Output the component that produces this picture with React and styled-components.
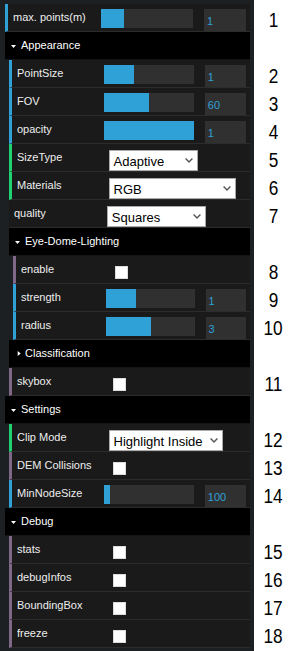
import React from 'react';
import styled, { createGlobalStyle } from 'styled-components';

const GlobalStyle = createGlobalStyle`
  html, body { margin: 0; padding: 0; background: #fff; }
  body { font-family: "Liberation Sans", Arial, sans-serif; }
`;

const Page = styled.div`
  display: flex;
  width: 296px;
  height: 651px;
  overflow: hidden;
  background: #fff;
`;

const Panel = styled.div`
  width: 254px;
  flex: none;
  box-sizing: border-box;
  padding: 4px 4px 0 5px;
  background: #1c2022;
  font: 11px "Liberation Sans", Arial, sans-serif;
  color: #eee;
`;

const Folder = styled.div`
  border-left: 4px solid transparent;
`;

const Title = styled.div`
  margin-left: -4px;
  height: 27px;
  background: #000;
  color: #fff;
  border-bottom: 1px solid #141414;
  display: flex;
  align-items: center;
  padding-left: 6px;
`;

const Arrow = styled.span`
  width: 10px;
  height: 27px;
  flex: none;
  display: flex;
  align-items: center;
`;

const TitleText = styled.span`
  line-height: 27px;
  white-space: nowrap;
`;

const Row = styled.div`
  display: flex;
  height: 27px;
  background: #1a1a1a;
  border-bottom: 1px solid #2c2c2c;
  border-left: ${(p) => (p.$accent ? `3px solid ${p.$accent}` : 'none')};
  padding: 0 4px 0 5px;
`;

const Label = styled.div`
  width: 40%;
  flex: none;
  line-height: 27px;
  white-space: nowrap;
  overflow: hidden;
`;

const Control = styled.div`
  width: 60%;
  flex: none;
  display: flex;
  align-items: flex-start;
`;

const Slider = styled.div`
  width: 66%;
  flex: none;
  margin-left: -5px;
  margin-top: 5px;
  height: 19px;
  background: #303030;
`;

const SliderFill = styled.div`
  height: 100%;
  background: #2fa1d6;
`;

const NumberField = styled.div`
  width: 30%;
  flex: none;
  margin-left: auto;
  margin-top: 5px;
  height: 22px;
  box-sizing: border-box;
  padding: 4px 3px 0;
  line-height: 16px;
  background: #303030;
  color: #2fa1d6;
`;

const SelectBox = styled.div`
  width: ${(p) => p.$w}px;
  flex: none;
  margin-top: 6px;
  height: 21px;
  box-sizing: border-box;
  border: 1px solid #a9a9a9;
  background: #fff;
  color: #000;
  font-size: 13px;
  line-height: 16px;
  display: flex;
  justify-content: space-between;
  align-items: flex-start;
  padding: 3px 4px 0 4px;
  white-space: nowrap;
`;

const Chevron = styled.svg`
  flex: none;
  margin-top: 4px;
`;

const Check = styled.span`
  width: 13px;
  height: 13px;
  flex: none;
  box-sizing: border-box;
  margin: 10px 0 0 4px;
  background: #fff;
  border: 1px solid #dcdcdc;
`;

const Notes = styled.div`
  flex: 1;
  display: flex;
  flex-direction: column;
  padding: 4px 3px 0 0;
`;

const Note = styled.div`
  height: 28px;
  box-sizing: border-box;
  padding-top: 2px;
  line-height: 28px;
  text-align: center;
  font-family: "Liberation Sans", Arial, sans-serif;
  font-size: 20px;
  color: #000;
`;

const NoteText = styled.span`
  display: inline-block;
  transform: scaleX(0.86);
`;

const BLUE = '#2fa1d6';
const PURPLE = '#806787';
const GREEN = '#1ed36f';

const FolderTitle = ({ open, children }) => (
  <Title>
    <Arrow>
      <svg width="6" height="5" viewBox="0 0 6 5">
        {open ? (
          <polygon points="0,2 5,2 2.5,5" fill="#fff" />
        ) : (
          <polygon points="2.7,0 5.7,2.5 2.7,5" fill="#fff" />
        )}
      </svg>
    </Arrow>
    <TitleText>{children}</TitleText>
  </Title>
);

const NumberRow = ({ label, value, pct }) => (
  <Row $accent={BLUE}>
    <Label>{label}</Label>
    <Control>
      <Slider>
        <SliderFill style={{ width: `${pct}%` }} />
      </Slider>
      <NumberField>{value}</NumberField>
    </Control>
  </Row>
);

const SelectRow = ({ label, value, width, accent }) => (
  <Row $accent={accent}>
    <Label>{label}</Label>
    <Control>
      <SelectBox $w={width}>
        <span>{value}</span>
        <Chevron width="8" height="5" viewBox="0 0 8 5">
          <polyline points="0.6,0.6 4,4 7.4,0.6" fill="none" stroke="#555" strokeWidth="1.4" />
        </Chevron>
      </SelectBox>
    </Control>
  </Row>
);

const BoolRow = ({ label }) => (
  <Row $accent={PURPLE}>
    <Label>{label}</Label>
    <Control>
      <Check />
    </Control>
  </Row>
);

const notes = [1, null, 2, 3, 4, 5, 6, 7, null, 8, 9, 10, null, 11, null, 12, 13, 14, null, 15, 16, 17, 18];

export default function App() {
  return (
    <>
      <GlobalStyle />
      <Page>
        <Panel>
          <NumberRow label="max. points(m)" value="1" pct={25} />
          <Folder>
            <FolderTitle open>Appearance</FolderTitle>
            <NumberRow label="PointSize" value="1" pct={34} />
            <NumberRow label="FOV" value="60" pct={50.5} />
            <NumberRow label="opacity" value="1" pct={100} />
            <SelectRow label="SizeType" value="Adaptive" width={89} accent={GREEN} />
            <SelectRow label="Materials" value="RGB" width={127} accent={GREEN} />
            <SelectRow label="quality" value="Squares" width={99} />
            <Folder>
              <FolderTitle open>Eye-Dome-Lighting</FolderTitle>
              <BoolRow label="enable" />
              <NumberRow label="strength" value="1" pct={34} />
              <NumberRow label="radius" value="3" pct={50.5} />
            </Folder>
            <Folder>
              <FolderTitle>Classification</FolderTitle>
            </Folder>
            <BoolRow label="skybox" />
          </Folder>
          <Folder>
            <FolderTitle open>Settings</FolderTitle>
            <SelectRow label="Clip Mode" value="Highlight Inside" width={114} accent={GREEN} />
            <BoolRow label="DEM Collisions" />
            <NumberRow label="MinNodeSize" value="100" pct={6.7} />
          </Folder>
          <Folder>
            <FolderTitle open>Debug</FolderTitle>
            <BoolRow label="stats" />
            <BoolRow label="debugInfos" />
            <BoolRow label="BoundingBox" />
            <BoolRow label="freeze" />
          </Folder>
        </Panel>
        <Notes>
          {notes.map((n, i) => (
            <Note key={i}>{n !== null && <NoteText>{n}</NoteText>}</Note>
          ))}
        </Notes>
      </Page>
    </>
  );
}
